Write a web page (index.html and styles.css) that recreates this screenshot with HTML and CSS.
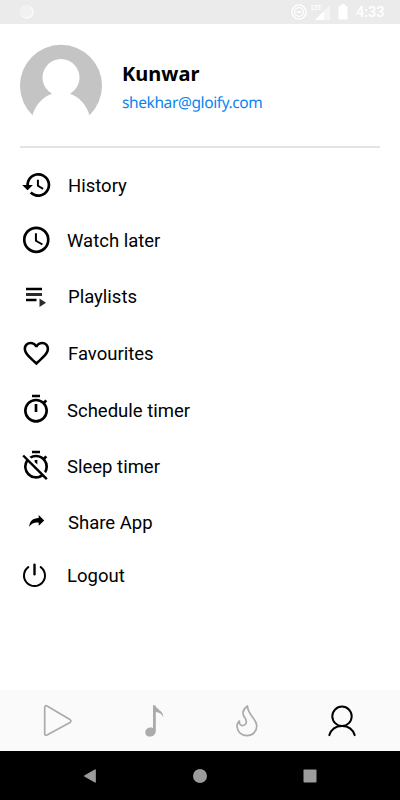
FILE: index.html
```
<!DOCTYPE html>
<html lang="en">
<head>
<meta charset="utf-8">
<title>Profile</title>
<link rel="stylesheet" href="styles.css">
</head>
<body>
<div class="screen">
  <header class="status">
    <svg class="status-left" width="16" height="16" viewBox="0 0 16 16"><circle cx="8" cy="8" r="6.700" fill="#fafafa"/><circle cx="7.400" cy="7.400" r="5.900" fill="#f1f1f1"/></svg>
    <svg class="dnd" width="16" height="16" viewBox="0 0 16 16" fill="none" stroke="#fff"><circle cx="8" cy="8" r="7.100" stroke-width="1.300"/><circle cx="8" cy="8" r="4.400" stroke-width="1.300"/><path d="M5.900 8h4.200" stroke-width="1.600"/></svg>
    <span class="lte">LTE</span>
    <svg class="signal" width="15" height="15" viewBox="0 0 15 15"><path d="M0 15 15 0v15z" fill="#f5f5f5"/><path d="M0 15 9 6v9z" fill="#fff"/></svg>
    <svg class="battery" width="10" height="16" viewBox="0 0 10 16"><path d="M3 0h4v2h1.200Q9.500 2 9.500 3.300V15.500H.500V3.300Q.500 2 1.800 2H3z" fill="#fff"/></svg>
    <span class="time">4:33</span>
  </header>
  <main class="content">
    <section class="profile">
      <svg class="avatar" width="82" height="72" viewBox="0 -.7 82 72"><path d="M12.500 70.500A41 41 0 1 1 69.500 70.500C66.500 60 59.500 52.500 50 49A18.500 18.500 0 1 0 32 49C22.500 52.500 15.500 60 12.500 70.500z" fill="#c4c4c4"/></svg>
      <div class="identity">
        <h1 class="name">Kunwar</h1>
        <p class="email">shekhar@gloify.com</p>
      </div>
    </section>
    <ul class="menu">
      <li class="item low"><svg class="icon" viewBox="-.7 0 24 24"><path d="M13 3a9 9 0 0 0-9 9H1l3.890 3.890.070.140L9 12H6a7 7 0 1 1 2.060 4.940l-1.420 1.420A9 9 0 1 0 13 3zm-1 5v5l4.280 2.540.720-1.210-3.500-2.080V8z"/></svg><span>History</span></li>
      <li class="item short nudge"><svg class="icon" viewBox="-.2 .9 24 24"><path d="M12 2a10 10 0 1 0 0 20 10 10 0 0 0 0-20zm0 18a8 8 0 1 1 0-16 8 8 0 0 1 0 16zm.5-13H11v6l5.250 3.150.750-1.230-4.500-2.670z"/></svg><span>Watch later</span></li>
      <li class="item tall"><svg class="icon" viewBox="0 0 32 32"><path d="M6 6.800h16v2.400H6zM6 17.800h10.500v2.400H6z"/><path d="M6 12h16v3H6zM19.500 17.500l6.500 4.200-6.500 4.200z" fill="#2b2b2b"/></svg><span>Playlists</span></li>
      <li class="item tall"><svg class="icon" viewBox="-.8 .1 25 25"><path d="M16.500 3c-1.740 0-3.410.81-4.500 2.090C10.910 3.810 9.240 3 7.500 3 4.420 3 2 5.420 2 8.500c0 3.780 3.400 6.860 8.550 11.540L12 21.350l1.450-1.320C18.600 15.360 22 12.280 22 8.500 22 5.420 19.580 3 16.500 3zm-4.400 15.550-.1.100-.1-.1C7.140 14.240 4 11.390 4 8.500 4 6.500 5.500 5 7.500 5c1.540 0 3.040.99 3.570 2.360h1.870C13.460 5.990 14.960 5 16.500 5c2 0 3.500 1.500 3.500 3.500 0 2.890-3.140 5.740-7.900 10.050z"/></svg><span>Favourites</span></li>
      <li class="item nudge low"><svg class="icon" viewBox="0 .5 24 24"><path d="M15 1H9v2h6zm-4 13h2V8h-2zm8.030-6.610 1.420-1.420c-.43-.51-.9-.99-1.410-1.410l-1.420 1.420A9 9 0 1 0 21 13c0-2.120-.74-4.070-1.970-5.610zM12 20a7 7 0 1 1 0-14 7 7 0 0 1 0 14z"/></svg><span>Schedule timer</span></li>
      <li class="item nudge low"><svg class="icon" viewBox="0 .5 24 24"><path d="M19.040 4.550l-1.420 1.430C16.070 4.740 14.120 4 12 4c-1.830 0-3.530.55-4.950 1.480l1.460 1.460C9.530 6.350 10.730 6 12 6a7 7 0 0 1 6.060 10.490l1.460 1.460A9 9 0 0 0 19.030 7.400l1.420-1.420zM15 1H9v2h6zm-4 8.440 2 2V8h-2zM3.020 4 1.750 5.270 4.500 8.030A9 9 0 0 0 16.980 20.500l2.500 2.500 1.270-1.270zM12 20A7 7 0 0 1 5.950 9.480l9.560 9.560C14.490 19.650 13.280 20 12 20z"/></svg><span>Sleep timer</span></li>
      <li class="item low"><svg class="icon" viewBox="0 0 32 32"><path d="M9 21c.8-6 3.800-8.800 9.700-9V9l5.500 5.500-5.500 5.300v-3.300c-4.500-.2-7 .8-9.700 4.500z"/></svg><span>Share App</span></li>
      <li class="item last nudge"><svg class="icon line" viewBox="0 0 32 32"><path d="M14.500 4.800v9.400" stroke-width="2.400"/><path d="M8.300 7.100a10.500 10.500 0 1 0 12.400 0" stroke-width="2"/></svg><span>Logout</span></li>
    </ul>
  </main>
  <nav class="tabs">
    <svg class="tab" viewBox="0 .5 40 40"><path d="M7.700 7v26q0 2.500 2.300 1.500l23-12.500q2-1.500 0-2.900L10 5.500Q7.700 4.500 7.700 7z"/></svg>
    <svg class="tab note" viewBox="-6.7 .3 40 40"><path d="M14.300 4.500h2.300c.8 4 8.200 5 8 12-1.500-3.500-4.200-5-7.500-5.300V30c0 3.800-2.800 5.900-5.900 5.900-2.800 0-4.600-1.700-4.600-4.200 0-3.600 4.300-5.900 7.700-4.300z"/></svg>
    <svg class="tab" viewBox="0 .5 40 40"><path d="M20.500 5.500c-5.500 4-5.500 8-2.500 12 2.300 3.500 1.500 7-1.700 7.500-2.600.3-4.500-1.500-3.800-4.500C10.500 22 10 24 10 26c.5 5.500 4.500 9.200 10 9.200 6 0 10-4.700 9.700-10.200C29 17.500 20.500 14 20.500 5.500z"/></svg>
    <svg class="tab active" viewBox="0 .9 40 40"><circle cx="20" cy="16.200" r="9.700"/><path d="M7.300 35c2-6.300 7-9.200 12.700-9.200S30.700 28.700 32.700 35"/></svg>
  </nav>
  <footer class="system">
    <svg class="key" viewBox="0 0 16 16"><path d="M2.300 8 13.300 1.700v12.600z" stroke="#9c9c9c" stroke-linejoin="round"/></svg>
    <svg class="key" viewBox="0 0 16 16"><circle cx="8" cy="8" r="7"/></svg>
    <svg class="key" viewBox="0 0 16 16"><rect x="1.500" y="1.500" width="13" height="13" rx=".8"/></svg>
  </footer>
</div>
</body>
</html>
```
FILE: styles.css
```
* { box-sizing: border-box; }
body { margin: 0; background: #fff; color: #000; font-family: Roboto, sans-serif; }
.screen { width: 400px; height: 800px; display: flex; flex-direction: column; }
.status { height: 24px; flex: none; background: #ebebeb; display: flex; align-items: center; padding: 0 16px 0 19px; color: #fff; }
.status-left { margin-right: auto; }
.dnd { margin-right: 1px; }
.lte { font-size: 8px; font-weight: 500; line-height: 8px; align-self: flex-start; margin: 4px -7px 0 3px; width: 11px; letter-spacing: -.8px; }
.signal { margin-right: 8px; }
.battery { margin-right: 8px; }
.time { width: 28px; font-size: 14.500px; font-weight: 500; line-height: 18px; padding-top: 2px; white-space: nowrap; }
.content { flex: 1; padding: 0 20px; }
.profile { height: 124px; padding-top: 20px; border-bottom: 2px solid #e4e4e4; display: flex; gap: 20px; }
.avatar { flex: none; }
.name { margin: 17px 0 0; font: 700 20px/26px "Noto Sans", sans-serif; }
.email { margin: 4px 0 0; color: #0a84f0; font: 15.500px/22px "Noto Sans", sans-serif; letter-spacing: -.400px; text-rendering: geometricPrecision; }
.menu { list-style: none; margin: 9px 0 0; padding: 0; font-size: 18.500px; line-height: 24px; }
.item { height: 56px; display: flex; align-items: center; gap: 16px; }
.short { height: 55px; }
.tall { height: 57px; }
.last { height: 52px; }
.nudge { gap: 15px; }
.low span { padding-top: 2px; }
.icon { width: 32px; height: 32px; flex: none; }
.line { fill: none; stroke: #000; stroke-linecap: round; }
.tabs { height: 61px; flex: none; background: #fafafa; display: flex; justify-content: space-between; align-items: center; padding: 0 38px 0 37px; }
.tab { width: 40px; height: 40px; fill: none; stroke: #ababab; stroke-width: 1.700; stroke-linejoin: round; stroke-linecap: round; }
.note { fill: #ababab; stroke: none; }
.active { stroke: #000; stroke-width: 2; }
.system { height: 49px; flex: none; background: #000; display: flex; justify-content: space-between; align-items: center; padding: 0 82px; }
.key { width: 16px; height: 16px; fill: #9c9c9c; }
```
